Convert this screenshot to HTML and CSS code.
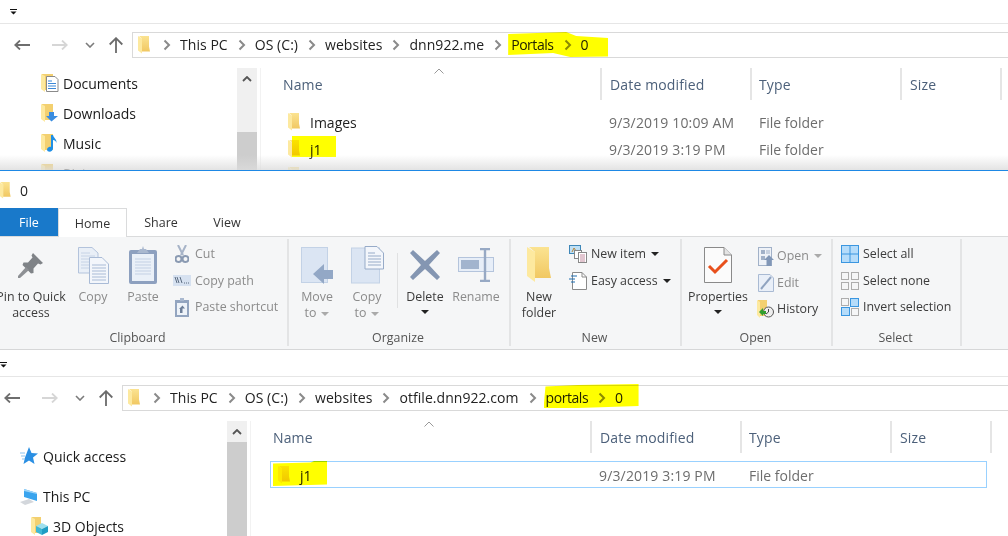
FILE: index.html
```html
<!DOCTYPE html>
<html lang="en">
<head>
<meta charset="utf-8">
<title>File Explorer windows</title>
<link rel="stylesheet" href="styles.css">
</head>
<body>
<svg class="defs" aria-hidden="true">
  <defs>
    <linearGradient id="fb" x1="0" y1="0" x2="0" y2="1"><stop offset="0" stop-color="#fbe391"/><stop offset="1" stop-color="#f1c862"/></linearGradient>
    <symbol id="folder" viewBox="0 0 24 36"><path d="M2 0H22V21L24 31H8V5Z" fill="url(#fb)"/><path d="M0 0L8 5V35L0 29Z" fill="#fde99f"/></symbol>
    <symbol id="chev" viewBox="0 0 8 12"><path d="M2 1.500L6.500 6L2 10.500" fill="none" stroke="#8a8a8a" stroke-width="2"/></symbol>
    <symbol id="back" viewBox="0 0 16 10"><path d="M6 .5L1.200 5L6 9.500M1.500 5H16" fill="none" stroke="currentColor" stroke-width="1.800"/></symbol>
    <symbol id="fwd" viewBox="0 0 16 10"><path d="M10 .5L14.800 5L10 9.500M14.500 5H0" fill="none" stroke="currentColor" stroke-width="1.800"/></symbol>
    <symbol id="down" viewBox="0 0 10 6"><path d="M1 1L5 5L9 1" fill="none" stroke="#7b7b7b" stroke-width="1.600"/></symbol>
    <symbol id="up" viewBox="0 0 14 16"><path d="M.7 7.500L7 1.200L13.300 7.500M7 1.500V16" fill="none" stroke="#6b6b6b" stroke-width="1.800"/></symbol>
    <symbol id="quick" viewBox="0 0 7 6"><path d="M0 0H7V1H0ZM.5 2.500H6.500L3.500 5.500Z" fill="#111"/></symbol>
    <symbol id="sbup" viewBox="0 0 10 6"><path d="M1 5L5 1L9 5" fill="none" stroke="#555" stroke-width="1.800"/></symbol>
    <symbol id="sort" viewBox="0 0 10 6"><path d="M.5 5.500L5 1L9.500 5.500" fill="none" stroke="#999" stroke-width="1"/></symbol>
  </defs>
</svg>

<section class="explorer win-top">
  <div class="quick"><svg class="quick-icon"><use href="#quick"/></svg></div>
  <div class="addr-row">
    <div class="navbtns">
      <span class="nb nb-back"><svg class="ic-arrow"><use href="#back"/></svg></span>
      <span class="nb nb-fwd"><svg class="ic-arrow"><use href="#fwd"/></svg></span>
      <span class="nb nb-down"><svg class="ic-down"><use href="#down"/></svg></span>
      <span class="nb nb-up"><svg class="ic-up"><use href="#up"/></svg></span>
    </div>
    <div class="addr">
      <svg class="ic-folder-addr"><use href="#folder"/></svg>
      <svg class="chev first"><use href="#chev"/></svg>
      <span class="crumb">This PC</span><svg class="chev"><use href="#chev"/></svg>
      <span class="crumb">OS (C:)</span><svg class="chev"><use href="#chev"/></svg>
      <span class="crumb">websites</span><svg class="chev"><use href="#chev"/></svg>
      <span class="crumb">dnn922.me</span><svg class="chev"><use href="#chev"/></svg>
      <span class="mark mark-a"><span class="crumb">Portals</span><svg class="chev"><use href="#chev"/></svg><span class="crumb">0</span></span>
    </div>
  </div>
  <div class="pane">
    <nav class="tree">
      <div class="tree-item d1">
        <svg class="tree-ic" viewBox="0 0 18 18"><path d="M1 0H12V16H1Z" fill="#f3d070"/><path d="M0 0L4 2V18L0 15Z" fill="#fde99f"/><path d="M5.500 2.500H14L17 5.500V17.500H5.500Z" fill="#fff" stroke="#8a8a8a"/><path d="M7 7H11M7 9.500H15M7 12H15M7 14.500H15" stroke="#3b87d6"/></svg>
        <span>Documents</span></div>
      <div class="tree-item d1">
        <svg class="tree-ic" viewBox="0 0 18 18"><path d="M1 0H12V16H1Z" fill="#f3d070"/><path d="M0 0L4 2V18L0 15Z" fill="#fde99f"/><path d="M8 8H13V12H17L10.500 17.500L5 12H8Z" fill="#3a8de0"/></svg>
        <span>Downloads</span></div>
      <div class="tree-item d1">
        <svg class="tree-ic" viewBox="0 0 18 18"><path d="M1 0H12V16H1Z" fill="#f3d070"/><path d="M0 0L4 2V18L0 15Z" fill="#fde99f"/><path d="M10 1H12C12.500 4 16 5 15.500 9C15 7 13.500 6 12 6V14.500C12 17 9.500 18 7.500 17.500C5.500 17 5.500 14 8 13C9 12.600 9.500 12.800 10 13Z" fill="#1e8fe6"/></svg>
        <span>Music</span></div>
      <div class="tree-item d1">
        <svg class="tree-ic" viewBox="0 0 18 18"><path d="M1 0H12V16H1Z" fill="#f3d070"/><path d="M0 0L4 2V18L0 15Z" fill="#fde99f"/></svg>
        <span>Pictures</span></div>
    </nav>
    <div class="scrollbar sb-top"><div class="sb-track"><svg class="sb-arrow"><use href="#sbup"/></svg></div><div class="sb-thumb"></div></div>
    <div class="list">
      <div class="cols">
        <div class="col col-name">Name<svg class="sort"><use href="#sort"/></svg></div>
        <div class="col col-date">Date modified</div>
        <div class="col col-type">Type</div>
        <div class="col col-size">Size</div>
      </div>
      <div class="row">
        <div class="cell-name"><svg class="ic-folder-row"><use href="#folder"/></svg><span>Images</span></div>
        <div class="cell-date">9/3/2019 10:09 AM</div>
        <div class="cell-type">File folder</div>
      </div>
      <div class="row">
        <div class="cell-name mark mark-b"><svg class="ic-folder-row"><use href="#folder"/></svg><span>j1</span></div>
        <div class="cell-date">9/3/2019 3:19 PM</div>
        <div class="cell-type">File folder</div>
      </div>
      <div class="row">
        <div class="cell-name"><svg class="ic-folder-row"><use href="#folder"/></svg></div>
      </div>
    </div>
  </div>
</section>

<section class="ribbon-win">
  <div class="title"><svg class="ic-folder-title"><use href="#folder"/></svg><span>0</span></div>
  <div class="tabs">
    <span class="tab tab-file">File</span>
    <span class="tab tab-home">Home</span>
    <span class="tab tab-share">Share</span>
    <span class="tab tab-view">View</span>
  </div>
  <div class="ribbon">
    <div class="group g-clip">
      <div class="group-body">
        <div class="lg w-pin">
          <div class="lg-icon"><svg width="26" height="26" viewBox="0 0 26 26"><path d="M15 1L25 11L22.500 12.500L20 11.500L15.500 16.500L15.500 21L13 21.500L4.500 13L5.500 10.500L10 10.500L14.500 5.500L13.500 3.500Z" fill="#7f8387"/><path d="M8 15L11 18L2 26L0 26L0 24Z" fill="#8d9094"/></svg></div>
          <div class="lg-text">Pin to Quick<br>access</div>
        </div>
        <div class="lg w-copy off">
          <div class="lg-icon"><svg width="31" height="37" viewBox="0 0 31 37"><path d="M.5.5H14L20 6V26H.5Z" fill="#e9eff7" stroke="#b3c3dc"/><path d="M3 6H12M3 9H17M3 12H17M3 15H17M3 18H17M3 21H17" stroke="#c6d3e6"/><path d="M11.500 10.500H24L30.500 17V36.500H11.500Z" fill="#f3f6fb" stroke="#a9bbd6"/><path d="M14 18H28M14 21H28M14 24H28M14 27H28M14 30H28M14 33H28" stroke="#a9bbd6"/></svg></div>
          <div class="lg-text">Copy</div>
        </div>
        <div class="lg w-paste off">
          <div class="lg-icon"><svg width="28" height="38" viewBox="0 0 28 38"><rect x="0" y="4" width="28" height="34" rx="2" fill="#8da0bf"/><rect x="3" y="8" width="22" height="27" fill="#eaf0f8"/><path d="M6 13H22M6 16H22M6 19H22M6 22H22M6 25H22M6 28H22" stroke="#c3d0e4"/><path d="M8 7L11 3H13L14 0L15 3H17L20 7Z" fill="#a9b8cf"/></svg></div>
          <div class="lg-text">Paste</div>
        </div>
        <div class="sm-col sm-clip off">
          <div class="sm"><span class="sm-ic"><svg width="14" height="18" viewBox="0 0 14 18"><path d="M3 0L8 10M11 0L6 10" stroke="#a7b4c8" stroke-width="2"/><circle cx="3.500" cy="14" r="3" fill="none" stroke="#8a9ab2" stroke-width="2"/><circle cx="10.500" cy="14" r="3" fill="none" stroke="#8a9ab2" stroke-width="2"/></svg></span><span>Cut</span></div>
          <div class="sm"><span class="sm-ic"><svg width="18" height="11" viewBox="0 0 18 11"><rect width="18" height="11" fill="#d6e1f0"/><path d="M2 2L4 8M4 2L6 8M7 2L9 8" stroke="#5b6b80"/><path d="M11 8H12M13 8H14M15 8H16" stroke="#5b6b80"/></svg></span><span>Copy path</span></div>
          <div class="sm"><span class="sm-ic"><svg width="14" height="19" viewBox="0 0 14 19"><rect y="2" width="14" height="17" fill="#93a5c0"/><rect x="2" y="5" width="10" height="12" fill="#eef3f9"/><path d="M5 0H9V3H5Z" fill="#a9b8cf"/><path d="M5 15V11L4 11L7.500 7.500L10 10.500H7.500V15Z" fill="#6d7f99"/></svg></span><span>Paste shortcut</span></div>
        </div>
      </div>
      <div class="group-label">Clipboard</div>
    </div>

    <div class="group g-org">
      <div class="group-body">
        <div class="lg w-move off">
          <div class="lg-icon"><svg width="33" height="37" viewBox="0 0 33 37"><rect x=".5" y=".5" width="26" height="35" fill="#dbe5f3" stroke="#c3d2e6"/><path d="M12 27L23 17V23H32V32H23V37Z" fill="#93a8c6"/></svg></div>
          <div class="lg-text">Move<br>to<i class="caret grey"></i></div>
        </div>
        <div class="lg w-copyto off">
          <div class="lg-icon"><svg width="33" height="38" viewBox="0 0 33 38"><rect x=".5" y="2" width="28" height="35" fill="#dbe5f3" stroke="#c3d2e6"/><path d="M14 .5H26L32.500 7V23H14Z" fill="#f3f6fb" stroke="#97abc8"/><path d="M17 7H24M17 10H30M17 13H30M17 16H30M17 19H30" stroke="#97abc8"/></svg></div>
          <div class="lg-text">Copy<br>to<i class="caret grey"></i></div>
        </div>
        <div class="divider"></div>
        <div class="lg w-del">
          <div class="lg-icon"><svg width="32" height="32" viewBox="0 0 32 32"><path d="M4 1L16 12L28 1L31 4L20 16L31 28L28 31L16 20L4 31L1 28L12 16L1 4Z" fill="#8496b2"/></svg></div>
          <div class="lg-text">Delete<br><i class="caret solo"></i></div>
        </div>
        <div class="lg w-ren off">
          <div class="lg-icon"><svg width="36" height="34" viewBox="0 0 36 34"><rect x=".5" y="9.500" width="35" height="14" fill="#e7eef8" stroke="#b4c4dc"/><rect x="3" y="12" width="18" height="9" fill="#a2b4ce"/><path d="M22 1H32M27 1V33M22 33H32" fill="none" stroke="#97a9c4" stroke-width="2.400"/></svg></div>
          <div class="lg-text">Rename</div>
        </div>
      </div>
      <div class="group-label">Organize</div>
    </div>

    <div class="group g-new">
      <div class="group-body">
        <div class="lg w-newf">
          <div class="lg-icon"><svg class="ic-folder-lg"><use href="#folder"/></svg></div>
          <div class="lg-text">New<br>folder</div>
        </div>
        <div class="sm-col sm-new">
          <div class="sm"><span class="sm-ic"><svg width="18" height="18" viewBox="0 0 18 18"><rect x=".5" y=".5" width="11" height="8" fill="#bfe0f5" stroke="#3e87b8"/><path d="M3 7L5 3L7 6" stroke="#b8863a" fill="none"/><rect x="5.500" y="5.500" width="7" height="8" fill="#fff" stroke="#888"/><rect x="9.500" y="7.500" width="8" height="10" fill="#fff" stroke="#888"/><path d="M11 10H16M11 12H16M11 14H16M11 16H16" stroke="#c48ca0"/></svg></span><span>New item</span><i class="caret"></i></div>
          <div class="sm"><span class="sm-ic"><svg width="18" height="18" viewBox="0 0 18 18"><path d="M3.500.5H13L17.500 5V17.500H3.500Z" fill="#fff" stroke="#8a8a8a"/><path d="M13 .5V5H17.500" fill="none" stroke="#8a8a8a"/><path d="M2 4H8M0 7H6M2 10H6" stroke="#1f6fb2" stroke-width="1.200"/></svg></span><span>Easy access</span><i class="caret"></i></div>
        </div>
      </div>
      <div class="group-label">New</div>
    </div>

    <div class="group g-open">
      <div class="group-body">
        <div class="lg w-prop">
          <div class="lg-icon"><svg width="28" height="36" viewBox="0 0 28 36"><path d="M.5.5H20L27.500 8V35.500H.5Z" fill="#fbfbfb" stroke="#8a8a8a"/><path d="M20 .5V8H27.500" fill="#e4e4e4" stroke="#8a8a8a"/><path d="M5 19L11 25L23 13" fill="none" stroke="#e8501c" stroke-width="3"/></svg></div>
          <div class="lg-text">Properties<br><i class="caret solo"></i></div>
        </div>
        <div class="sm-col sm-open">
          <div class="sm off"><span class="sm-ic"><svg width="16" height="19" viewBox="0 0 16 19"><rect x=".5" y=".5" width="13" height="18" fill="#eef2f8" stroke="#a1b1c8"/><path d="M3 3H7V7H3ZM3 9H7V13H3Z" fill="#a1b1c8"/><path d="M8 4H12M8 6H12" stroke="#a1b1c8"/><path d="M11 8L16 13H13.500V19H8.500V13H6Z" fill="#8197b7"/></svg></span><span>Open</span><i class="caret grey"></i></div>
          <div class="sm off"><span class="sm-ic"><svg width="16" height="18" viewBox="0 0 16 18"><path d="M.5.5H12L15.500 4V17.500H.5Z" fill="#e9eff8" stroke="#a9bad3"/><path d="M3 15L13 3" stroke="#8fa3c0" stroke-width="2"/></svg></span><span>Edit</span></div>
          <div class="sm"><span class="sm-ic"><svg width="17" height="18" viewBox="0 0 17 18"><path d="M1 0H10V16H1Z" fill="#f3d070"/><path d="M0 0L3 2V18L0 15Z" fill="#fde99f"/><circle cx="11.500" cy="12" r="5" fill="#eee" stroke="#555"/><path d="M11.500 9V12L9 14" stroke="#444" fill="none"/><path d="M2 12L6 8V11H9V14H6V16Z" fill="#2f9e2f"/></svg></span><span>History</span></div>
        </div>
      </div>
      <div class="group-label">Open</div>
    </div>

    <div class="group g-sel">
      <div class="group-body">
        <div class="sm-col sm-sel">
          <div class="sm"><span class="sm-ic"><svg width="18" height="18" viewBox="0 0 18 18"><rect x=".5" y=".5" width="17" height="17" fill="#b5dcfa" stroke="#3a96e0"/><path d="M9 0V18M0 9H18" stroke="#3a96e0"/></svg></span><span>Select all</span></div>
          <div class="sm"><span class="sm-ic"><svg width="18" height="18" viewBox="0 0 18 18" fill="none" stroke="#adadad"><rect x=".5" y=".5" width="7" height="7"/><rect x="10.500" y=".5" width="7" height="7"/><rect x=".5" y="10.500" width="7" height="7"/><rect x="10.500" y="10.500" width="7" height="7"/></svg></span><span>Select none</span></div>
          <div class="sm"><span class="sm-ic"><svg width="18" height="18" viewBox="0 0 18 18"><rect x=".5" y=".5" width="7" height="7" fill="none" stroke="#adadad"/><rect x="9.500" y=".5" width="8" height="8" fill="#b5dcfa" stroke="#3a96e0"/><rect x=".5" y="9.500" width="8" height="8" fill="#b5dcfa" stroke="#3a96e0"/><rect x="10.500" y="10.500" width="7" height="7" fill="none" stroke="#adadad"/></svg></span><span>Invert selection</span></div>
        </div>
      </div>
      <div class="group-label">Select</div>
    </div>
  </div>
</section>

<section class="explorer win-bottom">
  <div class="quick"><svg class="quick-icon"><use href="#quick"/></svg></div>
  <div class="addr-row">
    <div class="navbtns">
      <span class="nb nb-back"><svg class="ic-arrow"><use href="#back"/></svg></span>
      <span class="nb nb-fwd"><svg class="ic-arrow"><use href="#fwd"/></svg></span>
      <span class="nb nb-down"><svg class="ic-down"><use href="#down"/></svg></span>
      <span class="nb nb-up"><svg class="ic-up"><use href="#up"/></svg></span>
    </div>
    <div class="addr">
      <svg class="ic-folder-addr"><use href="#folder"/></svg>
      <svg class="chev first"><use href="#chev"/></svg>
      <span class="crumb">This PC</span><svg class="chev"><use href="#chev"/></svg>
      <span class="crumb">OS (C:)</span><svg class="chev"><use href="#chev"/></svg>
      <span class="crumb">websites</span><svg class="chev"><use href="#chev"/></svg>
      <span class="crumb">otfile.dnn922.com</span><svg class="chev"><use href="#chev"/></svg>
      <span class="mark mark-c"><span class="crumb">portals</span><svg class="chev"><use href="#chev"/></svg><span class="crumb">0</span></span>
    </div>
  </div>
  <div class="pane">
    <nav class="tree tree-b">
      <div class="tree-item d0 group-end">
        <svg class="tree-ic" viewBox="0 0 18 18"><path d="M9 0L11.500 6L18 6.500L13 10.500L14.500 17L9 13.500L3.500 17L5 10.500" fill="#2a8fe3"/><path d="M0 6H5M1 9H5M2 12H5" stroke="#8cc3ef"/></svg>
        <span>Quick access</span></div>
      <div class="tree-item d0">
        <svg class="tree-ic" viewBox="0 0 18 18"><path d="M4 2L17 6V14L4 10Z" fill="#39a4ee"/><path d="M4 2L17 6L17 7L4 4Z" fill="#9fd5f8"/><path d="M0 15L9 12L14 15L5 18Z" fill="#d3d7dc"/></svg>
        <span>This PC</span></div>
      <div class="tree-item d1">
        <svg class="tree-ic" viewBox="0 0 18 18"><path d="M1 0H10V16H1Z" fill="#f3d070"/><path d="M0 0L4 2V18L0 15Z" fill="#fde99f"/><path d="M11 6L17 9L11 12L5 9Z" fill="#9fe0ee"/><path d="M5 9L11 12V18L5 15Z" fill="#3db7d6"/><path d="M17 9L11 12V18L17 15Z" fill="#1f9dc4"/></svg>
        <span>3D Objects</span></div>
    </nav>
    <div class="scrollbar sb-bottom"><div class="sb-track"><svg class="sb-arrow"><use href="#sbup"/></svg></div><div class="sb-thumb"></div></div>
    <div class="list">
      <div class="cols">
        <div class="col col-name">Name<svg class="sort"><use href="#sort"/></svg></div>
        <div class="col col-date">Date modified</div>
        <div class="col col-type">Type</div>
        <div class="col col-size">Size</div>
      </div>
      <div class="row selected">
        <div class="cell-name mark mark-d"><svg class="ic-folder-row"><use href="#folder"/></svg><span>j1</span></div>
        <div class="cell-date">9/3/2019 3:19 PM</div>
        <div class="cell-type">File folder</div>
      </div>
    </div>
  </div>
</section>
</body>
</html>
```
FILE: styles.css
```css
* { box-sizing: border-box; }
html, body { margin: 0; padding: 0; }
body {
  width: 1008px;
  height: 536px;
  overflow: hidden;
  background: #fff;
  font-family: "Open Sans", "Noto Sans", sans-serif;
  font-size: 14px;
  color: #1e1e1e;
  display: flex;
  flex-direction: column;
}
.defs { position: absolute; width: 0; height: 0; }
svg { display: block; flex: none; }

/* explorer window */
.explorer { position: relative; overflow: hidden; flex: none; }
.win-top { height: 170px; }
.win-top::after {
  content: "";
  position: absolute;
  left: 0; right: 0; bottom: 0;
  height: 15px;
  background: linear-gradient(rgba(220,220,220,0), rgba(220,220,220,.8));
}
.win-bottom { height: 186px; margin-left: -10px; padding-top: 3px; }

.quick { height: 24px; border-bottom: 1px solid #e6e6e6; padding: 9px 0 0 10px; }
.quick-icon { width: 7px; height: 6px; }

.addr-row { height: 44px; display: flex; align-items: flex-start; padding-top: 8px; }
.navbtns { width: 132px; height: 26px; display: flex; flex: none; }
.nb { display: flex; align-items: center; justify-content: center; height: 26px; }
.nb-back { width: 44px; color: #6e6e6e; }
.nb-fwd { width: 32px; color: #d6d6d6; }
.nb-down { width: 28px; }
.nb-up { width: 24px; }
.ic-arrow { width: 16px; height: 10px; }
.ic-down { width: 10px; height: 6px; }
.ic-up { width: 14px; height: 16px; }

.addr {
  flex: 1;
  height: 26px;
  margin-right: -30px;
  border: 1px solid #d9d9d9;
  display: flex;
  align-items: center;
  padding-left: 5px;
  color: #222;
  line-height: 24px;
}
.ic-folder-addr { width: 12px; height: 18px; }
.chev { width: 27px; height: 12px; }
.chev.first { margin-left: 3px; }
.crumb { white-space: nowrap; letter-spacing: .05px; }
.mark .crumb { letter-spacing: -.45px; }

/* yellow marker strokes */
.mark { position: relative; display: flex; align-items: center; }
.mark::after {
  content: "";
  position: absolute;
  background: #ffff00;
  mix-blend-mode: multiply;
}
.mark-a::after {
  left: -3px; top: -1px; width: 100px; height: 25px;
  clip-path: polygon(0 8%, 58% 0, 68% 16%, 100% 24%, 100% 98%, 62% 100%, 45% 84%, 0 92%);
}
.mark-c::after {
  left: -2px; top: -2px; width: 95px; height: 24px;
  clip-path: polygon(2% 10%, 36% 4%, 100% 0, 100% 92%, 36% 100%, 0 100%);
}
.mark-b::after {
  left: 11px; top: 0; width: 44px; height: 21px;
}
.mark-d::after {
  left: 2px; top: -1px; width: 54px; height: 25px;
  clip-path: polygon(0 10%, 70% 6%, 76% 0, 100% 0, 100% 94%, 0 100%);
}

.pane { display: flex; align-items: stretch; height: 200px; }
.tree { width: 237px; flex: none; }
.tree-b { padding-top: 20px; }
.tree-item { height: 30px; display: flex; align-items: center; color: #1a1a1a; white-space: nowrap; }
.tree-item.d1 { padding-left: 41px; }
.tree-item.d0 { padding-left: 30px; }
.tree-item.group-end { margin-bottom: 10px; }
.tree-ic { width: 18px; height: 18px; margin-right: 4px; }
.tree-item.d0 .tree-ic { margin-right: 5px; }

.scrollbar { width: 20px; flex: none; display: flex; flex-direction: column; background: #f0f0f0; }
.sb-track { padding-top: 8px; }
.sb-arrow { width: 10px; height: 6px; margin: 0 auto; }
.sb-top .sb-track { height: 64px; }
.sb-bottom .sb-track { height: 21px; }
.sb-thumb { flex: 1; background: #cdcdcd; }

.list { flex: 1; margin-left: 3px; border-left: 1px solid #f2f2f2; }
.cols { display: grid; grid-template-columns: 341px 150px 150px 100px; height: 32px; color: #4c607a; letter-spacing: .15px; }
.col { border-right: 2px solid #e5e5e5; display: flex; align-items: center; padding-top: 1px; white-space: nowrap; position: relative; }
.col-name { padding-left: 22px; }
.col-date { padding-left: 8px; }
.col-type { padding-left: 7px; }
.col-size { padding-left: 8px; }
.sort { position: absolute; left: 173px; top: 0; width: 10px; height: 6px; }

.row {
  margin: 8px 0 -8px 19px;
  width: 717px;
  height: 27px;
  border: 1px solid transparent;
  display: grid;
  grid-template-columns: 328px 150px 1fr;
  align-items: center;
  color: #6d6d6d;
}
.row.selected { border-color: #99d1ff; }
.cell-name { color: #1e1e1e; padding-left: 7px; display: flex; align-items: center; height: 25px; }
.cell-name span, .cell-date, .cell-type { padding-top: 2px; }
.cell-date { letter-spacing: .15px; }
.ic-folder-row { width: 12px; height: 18px; margin-right: 10px; }

/* ribbon window */
.ribbon-win { flex: none; height: 180px; border-top: 1px solid #1e88e5; display: flex; flex-direction: column; }
.title { height: 37px; display: flex; align-items: center; padding-top: 1px; font-size: 14px; }
.ic-folder-title { width: 12px; height: 17px; margin-left: -1px; margin-right: 9px; }
.tabs { height: 29px; display: flex; font-size: 12.500px; border-bottom: 1px solid #dadbdc; color: #333; }
.tab { display: flex; align-items: center; justify-content: center; height: 29px; }
.tab-file { width: 58px; height: 28px; background: #1979ca; color: #fff; }
.tab-home { width: 69px; background: #fff; border: 1px solid #dadbdc; border-bottom: 0; }
.tab-share { width: 68px; }
.tab-view { width: 64px; }

.ribbon {
  height: 113px;
  background: #f5f6f7;
  border-bottom: 1px solid #d6d7d8;
  padding: 2px 0 3px;
  display: flex;
  font-size: 12.400px;
  color: #3c3c3c;
  line-height: 16px;
}
.group { border-right: 2px solid #e3e4e5; display: flex; flex-direction: column; flex: none; }
.g-clip { width: 289px; }
.g-org { width: 222px; }
.g-new { width: 171px; }
.g-open { width: 151px; }
.g-sel { width: 129px; }
.group-body { flex: 1; display: flex; min-height: 0; padding-top: 2px; }
.group-label { height: 16px; text-align: center; color: #555; padding-right: 2px; }
.g-clip .group-label { padding-right: 12px; }

.lg { display: flex; flex-direction: column; align-items: center; flex: none; text-align: center; }
.lg-icon { height: 48px; display: flex; align-items: center; justify-content: center; }
.lg-text { white-space: nowrap; }
.off { color: #8b8b8b; }
.w-pin { width: 62px; }
.w-copy { width: 62px; }
.w-paste { width: 38px; }
.g-org .group-body { padding-left: 4px; }
.w-move, .w-copyto { width: 48px; margin-right: 2px; }
.w-del { width: 50px; }
.w-ren { width: 52px; }
.divider { width: 1px; height: 55px; margin: 12px 2px 0 4px; background: #e0e1e2; }
.w-newf { width: 56px; }
.ic-folder-lg { width: 24px; height: 36px; }
.w-prop { width: 72px; }

.sm-col { display: flex; flex-direction: column; flex: none; }
.sm { height: 26.500px; display: flex; align-items: center; white-space: nowrap; }
.sm-ic { display: flex; align-items: center; justify-content: center; flex: none; }
.sm-clip { margin-left: 10px; }
.sm-clip .sm-ic { width: 20px; margin-right: 3px; }
.sm-new { margin-left: 1px; }
.sm-new .sm-ic { width: 20px; margin-right: 3px; }
.sm-open { margin-left: 3px; padding-top: 2px; }
.sm-open .sm-ic { width: 17px; margin-right: 3px; }
.sm-sel { margin-left: 8px; }
.sm-sel .sm-ic { width: 18px; margin-right: 4px; }

.caret {
  display: inline-block;
  width: 0; height: 0;
  border: 4px solid transparent;
  border-top-color: #222;
  border-bottom: 0;
  margin-left: 5px;
  vertical-align: middle;
}
.caret.grey { border-top-color: #aaa; }
.caret.solo { margin-left: 0; vertical-align: 3px; }
```
